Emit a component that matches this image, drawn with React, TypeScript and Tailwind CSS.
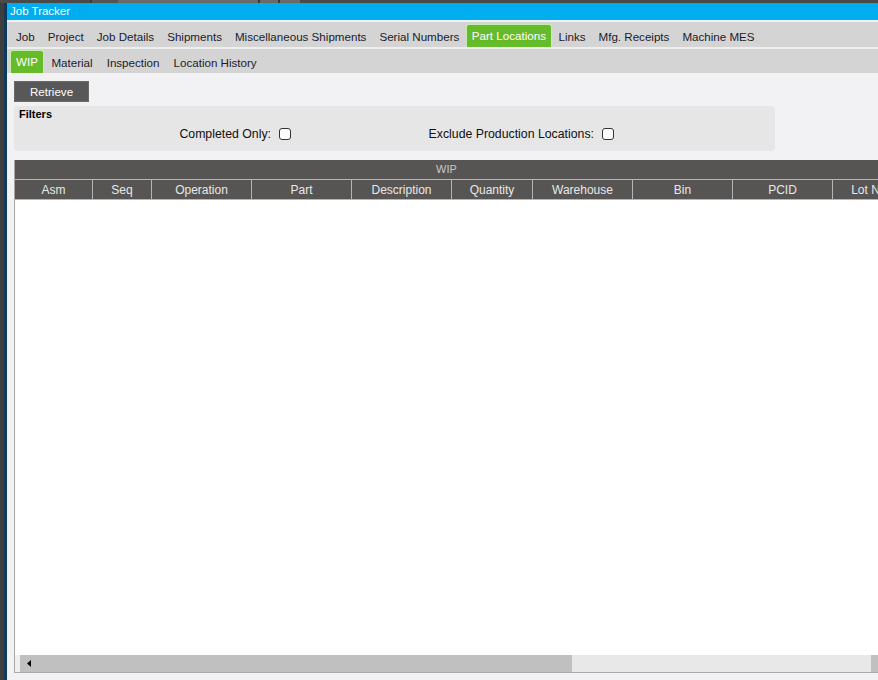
import React from "react";

const mainTabs = [
  "Job",
  "Project",
  "Job Details",
  "Shipments",
  "Miscellaneous Shipments",
  "Serial Numbers",
  "Part Locations",
  "Links",
  "Mfg. Receipts",
  "Machine MES",
];
const subTabs = ["WIP", "Material", "Inspection", "Location History"];
const cols: [string, number][] = [
  ["Asm", 78],
  ["Seq", 59],
  ["Operation", 100],
  ["Part", 100],
  ["Description", 100],
  ["Quantity", 81],
  ["Warehouse", 100],
  ["Bin", 100],
  ["PCID", 100],
  ["Lot Number", 100],
];

function Tab({ label, active }: { label: string; active: boolean }) {
  return active ? (
    <div className="h-[23px] px-[5px] flex items-center bg-[#66bb2a] border border-[#c8ecb0] border-b-0 rounded-t-[3px] text-white">
      {label}
    </div>
  ) : (
    <div className="h-[23px] px-[6.5px] flex items-center pt-[2px] text-[#1b1b2b]">{label}</div>
  );
}

export default function App() {
  return (
    <div
      className="w-[878px] h-[680px] overflow-hidden flex flex-col bg-[#f2f2f4] text-[11.6px]"
      style={{ fontFamily: '"Liberation Sans", Arial, sans-serif' }}
    >
      <div className="h-[3px] flex bg-[#4a4a4a]">
        <div className="w-[90px]" />
        <div className="w-[2px] bg-[#3a3a3a]" />
        <div className="w-[26px] bg-[#555]" />
        <div className="w-[140px] bg-[#6a6a6a]" />
        <div className="w-[2px] bg-[#3a3a3a]" />
        <div className="w-[18px] bg-[#6a6a6a]" />
        <div className="w-[2px] bg-[#3a3a3a]" />
        <div className="w-[20px] bg-[#6a6a6a]" />
      </div>
      <div className="flex flex-1 min-h-0">
        <div className="w-[4px] bg-[#3e3e3e]" />
        <div className="w-[3px] bg-[#0e3b5c]" />
        <div className="flex-1 flex flex-col min-w-0">
          <div className="h-[17px] bg-[#00adef] text-white pl-[3px] leading-[17px] text-[11.5px]">Job Tracker</div>
          <div className="h-[2px] bg-[#eef2f4]" />
          <div className="h-[25px] bg-[#d4d4d4] flex items-end pl-[2.5px]">
            {mainTabs.map((t) => (
              <Tab key={t} label={t} active={t === "Part Locations"} />
            ))}
          </div>
          <div className="h-[2px] bg-[#eeeeee]" />
          <div className="h-[24px] bg-[#d4d4d4] flex items-end pl-[3px] gap-[1px]">
            {subTabs.map((t) => (
              <Tab key={t} label={t} active={t === "WIP"} />
            ))}
          </div>
          <div className="flex-1 flex flex-col pl-[7px] min-h-0">
            <div className="mt-[8px] w-[75px] h-[21px] bg-[#585858] border border-[#6a6a6a] text-white flex items-center justify-center pt-[1px]">
              Retrieve
            </div>
            <div className="mt-[4px] w-[761px] h-[45px] bg-[#e6e6e6] rounded-[4px] flex flex-col">
              <div className="pl-[5px] pt-[1px] font-bold text-[11px] text-black leading-[14px]">Filters</div>
              <div className="flex mt-[4px] text-[#111] text-[12.3px]">
                <div className="w-[277px] flex justify-end items-center gap-[8px]">
                  <span>Completed Only:</span>
                  <span className="w-[12px] h-[12px] border border-[#333] rounded-[3px] bg-white" />
                </div>
                <div className="w-[323px] flex justify-end items-center gap-[8px]">
                  <span>Exclude Production Locations:</span>
                  <span className="w-[12px] h-[12px] border border-[#333] rounded-[3px] bg-white" />
                </div>
              </div>
            </div>
            <div className="mt-[9px] flex-1 flex flex-col min-h-0 border-l border-b border-[#a8a8a8] bg-white">
              <div className="h-[20px] bg-[#575553] text-[#c8c8c8] flex items-center justify-center border-b border-[#b5b5b5] text-[11px]">
                WIP
              </div>
              <div className="h-[20px] bg-[#575553] flex text-[#e8e8e8] border-b border-[#b5b5b5] text-[12px]">
                {cols.map(([c, w]) => (
                  <div
                    key={c}
                    className="shrink-0 flex items-center justify-center border-r border-[#b5b5b5] whitespace-nowrap overflow-hidden"
                    style={{ width: w }}
                  >
                    {c}
                  </div>
                ))}
              </div>
              <div className="flex-1 bg-white" />
              <div className="h-[17px] bg-[#c0c0c0] flex items-stretch">
                <div className="w-[5px] bg-[#f0f0f0]" />
                <div className="flex-1 flex items-center pl-[7px]">
                  <svg width="4" height="7" viewBox="0 0 4 7">
                    <path d="M4 0 L0 3.5 L4 7 Z" fill="#000" />
                  </svg>
                </div>
                <div className="w-[299px] bg-[#e8e8e8]" />
                <div className="w-[7px]" />
              </div>
            </div>
            <div className="h-[7px] shrink-0" />
          </div>
        </div>
      </div>
    </div>
  );
}
